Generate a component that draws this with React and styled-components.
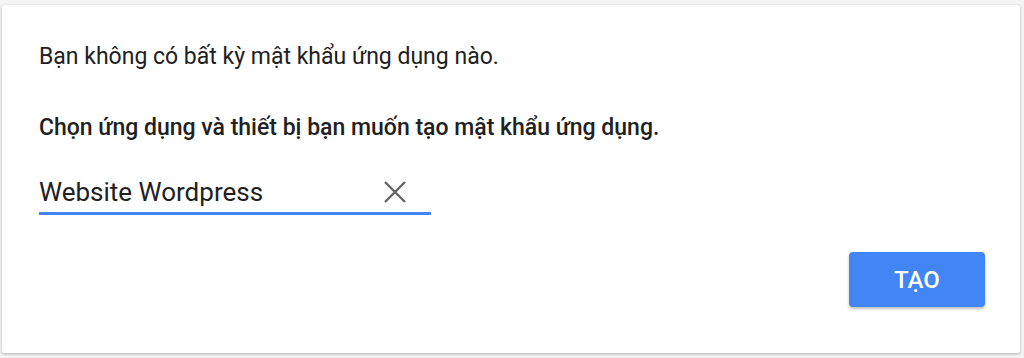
import React from "react";
import styled, { createGlobalStyle } from "styled-components";

const Global = createGlobalStyle`
  html, body { margin: 0; padding: 0; background: #f4f4f4; }
  body { font-family: Roboto, "Noto Sans", Arial, sans-serif; }
`;

const Page = styled.div`
  width: 1024px;
  height: 358px;
  padding: 5px 4px 5px 2px;
  box-sizing: border-box;
`;

const Card = styled.div`
  background: #fff;
  height: 348px;
  border-radius: 2px;
  box-shadow: 0 1px 3px rgba(0,0,0,0.28), 0 0 1px rgba(0,0,0,0.1);
  box-sizing: border-box;
  padding: 0 35px 0 37px;
  display: flex;
  flex-direction: column;
`;

const Text = styled.p`
  margin: 0;
  color: #212121;
  font-size: 23px;
  font-weight: ${(p) => (p.$bold ? 500 : 400)};
  line-height: 1;
  padding-top: ${(p) => p.$top}px;
`;

const Field = styled.div`
  margin-top: 40px;
  width: 392px;
  display: flex;
  align-items: center;
  justify-content: space-between;
  border-bottom: 3px solid #4285f4;
  padding-bottom: 7px;
`;

const FieldText = styled.span`
  font-size: 26px;
  color: #212121;
  line-height: 1;
`;

const Clear = styled.svg`
  width: 24px;
  height: 24px;
  margin-right: 24px;
`;

const Footer = styled.div`
  margin-top: 37px;
  display: flex;
  justify-content: flex-end;
`;

const Button = styled.button`
  width: 136px;
  height: 55px;
  border: none;
  border-radius: 4px;
  background: #4285f4;
  color: #fff;
  font-family: Roboto, sans-serif;
  font-size: 24px;
  font-weight: 500;
  box-shadow: 0 2px 3px rgba(0,0,0,0.25);
  cursor: pointer;
`;

export default function App() {
  return (
    <Page>
      <Global />
      <Card>
        <Text $top={40}>Bạn không có bất kỳ mật khẩu ứng dụng nào.</Text>
        <Text $bold $top={48}>Chọn ứng dụng và thiết bị bạn muốn tạo mật khẩu ứng dụng.</Text>
        <Field>
          <FieldText>Website Wordpress</FieldText>
          <Clear viewBox="0 0 24 24">
            <path d="M2 2 L22 22 M22 2 L2 22" stroke="#666" strokeWidth="2.4" fill="none" />
          </Clear>
        </Field>
        <Footer>
          <Button>TẠO</Button>
        </Footer>
      </Card>
    </Page>
  );
}
